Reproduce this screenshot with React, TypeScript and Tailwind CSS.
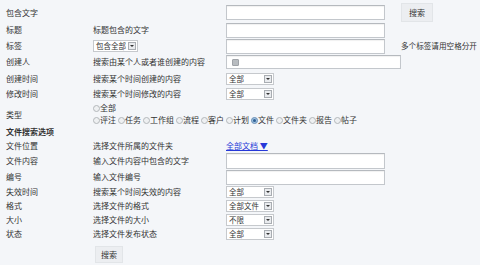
const font = { fontFamily: '"Noto Sans CJK SC", "Liberation Sans", sans-serif' };

function TextBox({ w = "w-[159px]", h = "h-[15px]", icon = false }: { w?: string; h?: string; icon?: boolean }) {
  return (
    <div className={`${w} ${h} shrink-0 flex items-center border border-[#c3c7cc] border-t-[#b5b9be] bg-white shadow-[inset_0_1px_1px_rgba(0,0,0,0.06)]`}>
      {icon && <span className="ml-[5px] w-[7px] h-[7px] rounded-[1px] bg-[#b8bcc0] border border-[#9fa3a8]" />}
    </div>
  );
}

function Select({ label, w = "w-[48px]" }: { label: string; w?: string }) {
  return (
    <div className={`${w} h-[12px] shrink-0 flex items-center justify-between border border-[#c6c9cd] bg-white pl-[2px] pr-[1px] whitespace-nowrap`}>
      <span className="leading-none text-[7.5px]">{label}</span>
      <span className="w-[8px] h-[8px] shrink-0 flex items-center justify-center border border-[#a9adb2] bg-[#e9ebee]">
        <span className="w-0 h-0 border-l-[2px] border-r-[2px] border-t-[2px] border-l-transparent border-r-transparent border-t-[#333]" />
      </span>
    </div>
  );
}

function Radio({ label, checked = false }: { label: string; checked?: boolean }) {
  return (
    <span className="flex items-center mr-[2px] whitespace-nowrap">
      <span
        className={`w-[7px] h-[7px] rounded-full border flex items-center justify-center ${
          checked ? "border-[#6b8fb5] bg-[#9ec1e0]" : "border-[#b3b7bb] bg-[#eef0f2]"
        }`}
      >
        {checked && <span className="w-[3px] h-[3px] rounded-full bg-[#2f5f93]" />}
      </span>
      <span className="leading-none">{label}</span>
    </span>
  );
}

function Row({ h, label, desc, bold = false, children }: { h: string; label: string; desc?: React.ReactNode; bold?: boolean; children?: React.ReactNode }) {
  return (
    <div className={`grid grid-cols-[87px_133px_1fr] ${h} items-center whitespace-nowrap`}>
      <span className={bold ? "font-bold" : ""}>{label}</span>
      <div className="flex items-center">{desc}</div>
      <div className="flex items-center">{children}</div>
    </div>
  );
}

export default function App() {
  return (
    <div className="w-[480px] h-[265px] bg-[#f4f6f9] text-[#333] text-[8px] leading-none overflow-hidden" style={font}>
      <div className="pl-[6px] pt-[3px]">
        <Row h="h-[19px]" label="包含文字">
          <TextBox />
          <button className="ml-[16px] w-[32px] h-[19px] shrink-0 bg-[#eceef1] border border-[#e2e5e8] text-[8px] leading-none text-[#333]">搜索</button>
        </Row>
        <Row h="h-[16px]" label="标题" desc="标题包含的文字">
          <TextBox />
        </Row>
        <Row h="h-[16px]" label="标签" desc={<Select label="包含全部" w="w-[45px]" />}>
          <TextBox />
          <span className="ml-[16px] text-[7.6px]">多个标签请用空格分开</span>
        </Row>
        <Row h="h-[16px]" label="创建人" desc="搜索由某个人或者谁创建的内容">
          <TextBox w="w-[175px]" h="h-[14px]" icon />
        </Row>
        <Row h="h-[17px]" label="创建时间" desc="搜索某个时间创建的内容">
          <Select label="全部" />
        </Row>
        <Row h="h-[14px]" label="修改时间" desc="搜索某个时间修改的内容">
          <Select label="全部" />
        </Row>
        <div className="grid grid-cols-[87px_1fr] h-[25px] items-center">
          <span className="pt-[3px]">类型</span>
          <div className="flex flex-col gap-[4px] pt-[1px]">
            <div className="flex">
              <Radio label="全部" />
            </div>
            <div className="flex">
              <Radio label="评注" />
              <Radio label="任务" />
              <Radio label="工作组" />
              <Radio label="流程" />
              <Radio label="客户" />
              <Radio label="计划" />
              <Radio label="文件" checked />
              <Radio label="文件夹" />
              <Radio label="报告" />
              <Radio label="帖子" />
            </div>
          </div>
        </div>
        <Row h="h-[12px]" label="文件搜索选项" bold />
        <Row h="h-[15px]" label="文件位置" desc="选择文件所属的文件夹">
          <span className="text-[#2638d8] underline">全部文档 ▼</span>
        </Row>
        <Row h="h-[16px]" label="文件内容" desc="输入文件内容中包含的文字">
          <TextBox h="h-[16px]" />
        </Row>
        <Row h="h-[16px]" label="编号" desc="输入文件编号">
          <TextBox h="h-[15px]" />
        </Row>
        <Row h="h-[14px]" label="失效时间" desc="搜索某个时间失效的内容">
          <Select label="全部" />
        </Row>
        <Row h="h-[14px]" label="格式" desc="选择文件的格式">
          <Select label="全部文件" />
        </Row>
        <Row h="h-[14px]" label="大小" desc="选择文件的大小">
          <Select label="不限" />
        </Row>
        <Row h="h-[14px]" label="状态" desc="选择文件发布状态">
          <Select label="全部" />
        </Row>
        <div className="pl-[89px] pt-[5px]">
          <button className="w-[28px] h-[17px] bg-[#eceef1] border border-[#e2e5e8] text-[8px] leading-none text-[#333]">搜索</button>
        </div>
      </div>
    </div>
  );
}
